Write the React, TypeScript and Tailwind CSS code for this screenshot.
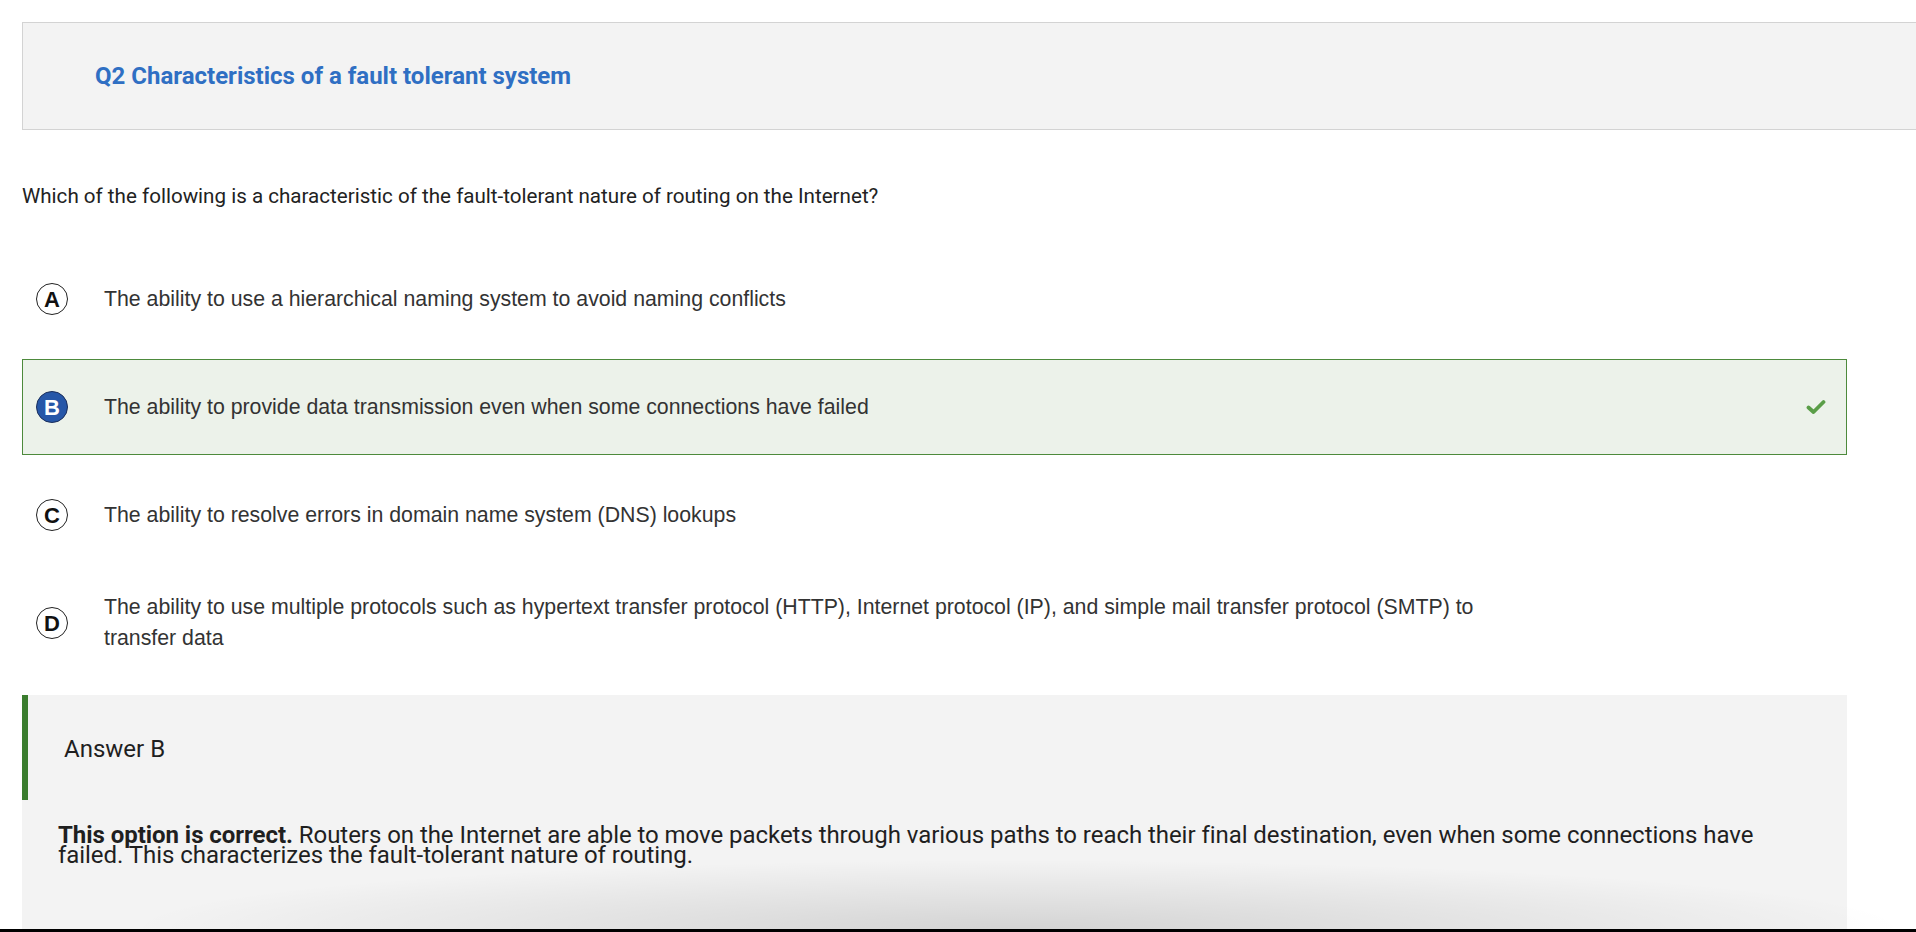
import React from "react";

const options = [
  { letter: "A", text: "The ability to use a hierarchical naming system to avoid naming conflicts" },
  { letter: "B", text: "The ability to provide data transmission even when some connections have failed", correct: true },
  { letter: "C", text: "The ability to resolve errors in domain name system (DNS) lookups" },
  {
    letter: "D",
    text: "The ability to use multiple protocols such as hypertext transfer protocol (HTTP), Internet protocol (IP), and simple mail transfer protocol (SMTP) to transfer data",
  },
];

function Check() {
  return (
    <svg width="20" height="16" viewBox="0 0 20 16" className="shrink-0">
      <path d="M2.5 8.5 L7.5 13 L17.5 3" stroke="#5a9e48" strokeWidth="3.8" fill="none" strokeLinecap="round" strokeLinejoin="round" />
    </svg>
  );
}

export default function App() {
  return (
    <div className="relative w-[1916px] h-[932px] overflow-hidden bg-white font-['Roboto',sans-serif]">
      <div className="mt-[22px] ml-[22px] h-[108px] w-[1940px] border border-[#d3d3d3] bg-[#f3f3f3] flex items-center pl-[72px]">
        <span className="text-[24px] font-bold text-[#2f6fc3]">Q2 Characteristics of a fault tolerant system</span>
      </div>

      <p className="mt-[53px] pl-[22px] text-[20.6px] leading-[27px] text-[#222]">
        Which of the following is a characteristic of the fault-tolerant nature of routing on the Internet?
      </p>

      <div className="mt-[41px] ml-[22px] w-[1825px] flex flex-col gap-[12px] font-['Liberation_Sans',Arial,sans-serif]">
        {options.map((o) => (
          <div
            key={o.letter}
            className={
              o.correct
                ? "h-[96px] flex items-center pl-[13px] pr-[20px] border border-[#4d8a3c] bg-[#ecf2ea]"
                : "h-[96px] flex items-center pl-[13px] pr-[20px] border border-transparent"
            }
          >
            <div
              className={
                o.correct
                  ? "w-[32px] h-[32px] rounded-full border border-[#1b2f5c] bg-[#2657a8] text-white flex items-center justify-center text-[22px] font-bold shrink-0"
                  : "w-[32px] h-[32px] rounded-full border border-[#222] bg-white text-[#111] flex items-center justify-center text-[22px] font-bold shrink-0"
              }
            >
              {o.letter}
            </div>
            <div className="ml-[36px] flex-1">
              <div className="max-w-[1400px] text-[21.3px] leading-[31px] text-[#333]">{o.text}</div>
            </div>
            {o.correct && <Check />}
          </div>
        ))}
      </div>

      <div className="mt-[24px] ml-[22px] w-[1825px] h-[300px] bg-[#f3f3f3]">
        <div className="h-[105px] border-l-[6px] border-[#3b7d2e] flex items-center pl-[36px] pt-[3px]">
          <span className="text-[24px] text-[#1f1f1f]">Answer B</span>
        </div>
        <p className="pt-[25px] pl-[36px] pr-[40px] text-[24px] leading-[20px] text-[#1f1f1f] tracking-[-0.05px]">
          <span className="font-bold">This option is correct.</span> Routers on the Internet are able to move packets through various paths to reach their final destination, even when some connections have failed. This characterizes the fault-tolerant nature of routing.
        </p>
      </div>

      <div className="absolute left-[120px] right-0 bottom-[3px] h-[70px] bg-[radial-gradient(ellipse_at_bottom,rgba(0,0,0,0.13),transparent_70%)] pointer-events-none" />
      <div className="absolute left-0 right-0 bottom-0 h-[3px] bg-black" />
    </div>
  );
}
